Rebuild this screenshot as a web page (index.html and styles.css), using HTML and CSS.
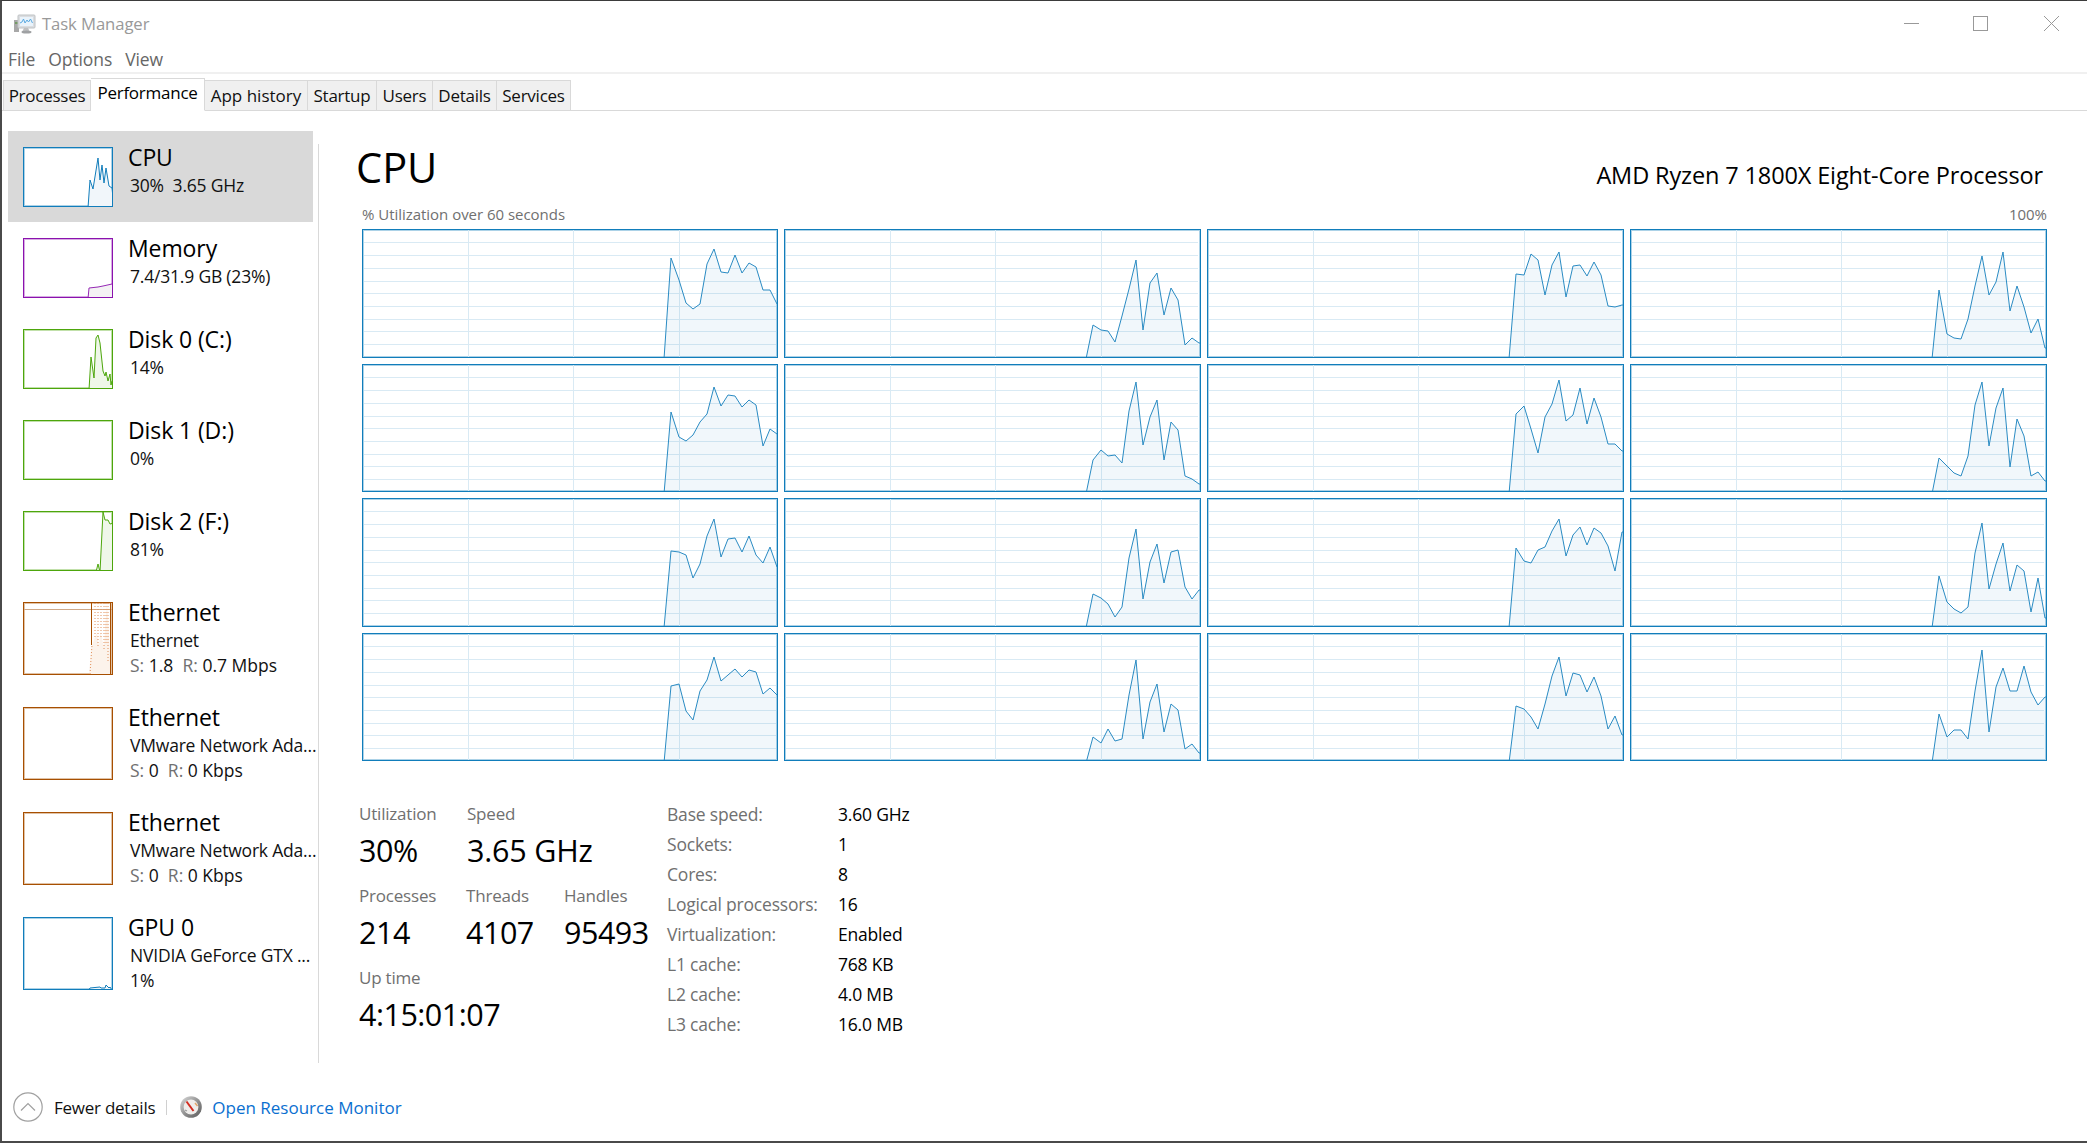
FILE: index.html
```html
<!DOCTYPE html>
<html lang="en">
<head>
<meta charset="utf-8">
<title>Task Manager</title>
<link rel="stylesheet" href="styles.css">
</head>
<body>
<svg class="defs" width="0" height="0" aria-hidden="true">
  <symbol id="grid" viewBox="0 0 419 130" width="419" height="130">
    <path class="grid-line" d="M2 13.5H414M2 26.5H414M2 39.5H414M2 52.5H414M2 64.5H414M2 77.5H414M2 90.5H414M2 102.5H414M2 115.5H414M106.5 0V130M211.5 0V130M317.5 0V130"/>
  </symbol>
</svg>
<div class="window">
  <div class="glow"></div>
  <header class="titlebar">
    <svg class="app-icon" viewBox="0 0 24 20" width="24" height="20">
      <rect x="1" y="6" width="5" height="12" fill="#9a9a9a"/>
      <rect x="2" y="8" width="3" height="2" fill="#5f8a4c"/>
      <rect x="5" y="1" width="17" height="13" rx="1" fill="#d5d8db" stroke="#b5b8bb"/>
      <rect x="7" y="3" width="13" height="9" fill="#e6f2fb"/>
      <path d="M7 9l2-1 1.5-3 1.5 4 2-3 1.5 2 2-3 2 4" fill="none" stroke="#3f9bdc" stroke-width="1"/>
      <path d="M11 14h4l2 4H9z" fill="#b4b6b8"/>
      <ellipse cx="13.5" cy="18" rx="5" ry="1.5" fill="#8f9193"/>
    </svg>
    <span class="app-title">Task Manager</span>
    <div class="controls">
      <svg class="ctl ctl-min" viewBox="0 0 15 15" width="15" height="15"><path d="M0 7.5H15"/></svg>
      <svg class="ctl ctl-max" viewBox="0 0 15 15" width="15" height="15"><rect x=".5" y=".5" width="14" height="14"/></svg>
      <svg class="ctl ctl-close" viewBox="0 0 15 15" width="15" height="15"><path d="M0 0L15 15M15 0L0 15"/></svg>
    </div>
  </header>
  <nav class="menubar"><span>File</span><span>Options</span><span>View</span></nav>
  <div class="tabs">
    <div class="tab t1">Processes</div>
    <div class="tab t2 active">Performance</div>
    <div class="tab t3">App history</div>
    <div class="tab t4">Startup</div>
    <div class="tab t5">Users</div>
    <div class="tab t6">Details</div>
    <div class="tab t7">Services</div>
  </div>
  <div class="content">
    <aside class="sidebar">
      <div class="item selected">
        <div class="thumb blue"><svg viewBox="0 0 88 58"><polygon points="64,60 66,32 69,41 74,10 76,32 78,17 80,35 82,20 85,38 88,40 90,60"/></svg></div>
        <div class="info"><div class="name">CPU</div><div class="sub">30%&nbsp; 3.65 GHz</div></div>
      </div>
      <div class="item">
        <div class="thumb purple"><svg viewBox="0 0 88 58"><polygon points="64,60 65,49 74,48 79,47 88,45 90,45 90,60"/></svg></div>
        <div class="info"><div class="name">Memory</div><div class="sub">7.4/31.9 GB (23%)</div></div>
      </div>
      <div class="item">
        <div class="thumb green"><svg viewBox="0 0 88 58"><polygon points="65,60 67,27 70,48 72,8 74,5 76,13 79,41 81,46 82,42 84,51 86,44 87,55 88,51 90,51 90,60"/></svg></div>
        <div class="info"><div class="name">Disk 0 (C:)</div><div class="sub">14%</div></div>
      </div>
      <div class="item">
        <div class="thumb green"></div>
        <div class="info"><div class="name">Disk 1 (D:)</div><div class="sub">0%</div></div>
      </div>
      <div class="item">
        <div class="thumb green"><svg viewBox="0 0 88 58"><polygon points="72,60 74,52 76,60 79,0 81,8 84,8 86,12 90,11 90,60"/></svg></div>
        <div class="info"><div class="name">Disk 2 (F:)</div><div class="sub">81%</div></div>
      </div>
      <div class="item tall">
        <div class="thumb orange tall"><svg viewBox="0 0 88 71">
          <polygon class="eth-fill" points="65,73 67,45 71,34 73,30 75,44 76,30 78,35 80,45 81,25 83,0 85,30 87,71 88,73"/>
          <path class="eth-guide" d="M0 6.5H88"/>
          <path class="eth-solid" d="M67.5 0V42M86.5 0V71"/>
          <path class="eth-dots" d="M66 71L68 42M71 0V34M74 0V44M77 0V35M80 0V48M82 0V42M84 0V60"/>
        </svg></div>
        <div class="info"><div class="name">Ethernet</div><div class="sub">Ethernet</div><div class="sub"><i>S:</i> 1.8&nbsp; <i>R:</i> 0.7 Mbps</div></div>
      </div>
      <div class="item tall">
        <div class="thumb orange tall"></div>
        <div class="info"><div class="name">Ethernet</div><div class="sub">VMware Network Ada...</div><div class="sub"><i>S:</i> 0&nbsp; <i>R:</i> 0 Kbps</div></div>
      </div>
      <div class="item tall">
        <div class="thumb orange tall"></div>
        <div class="info"><div class="name">Ethernet</div><div class="sub">VMware Network Ada...</div><div class="sub"><i>S:</i> 0&nbsp; <i>R:</i> 0 Kbps</div></div>
      </div>
      <div class="item tall">
        <div class="thumb blue tall"><svg viewBox="0 0 88 71"><polygon points="64,73 66,70 76,69 77,70 81,70 82,67 85,70 86,69 88,72 90,73"/></svg></div>
        <div class="info"><div class="name">GPU 0</div><div class="sub">NVIDIA GeForce GTX ...</div><div class="sub">1%</div></div>
      </div>
    </aside>
    <div class="divider"></div>
    <main class="main">
      <div class="head">
        <h1 class="head-title">CPU</h1>
        <div class="head-model">AMD Ryzen 7 1800X Eight-Core Processor</div>
      </div>
      <div class="caption"><span>% Utilization over 60 seconds</span><span>100%</span></div>
      <div class="graphs">
        <div class="graph"><svg class="plot"><use href="#grid"/><polygon points="302,130 309,29 317,51 324,74 331,80 338,75 345,35 352,20 359,43 366,44 373,26 380,44 387,34 394,38 401,61 408,61 415,75 419,75 419,130"/></svg></div>
        <div class="graph"><svg class="plot"><use href="#grid"/><polygon points="302,130 309,96 317,101 324,102 331,113 338,87 345,60 352,31 359,101 366,54 373,44 380,86 387,59 394,71 401,116 408,109 415,114 419,114 419,130"/></svg></div>
        <div class="graph"><svg class="plot"><use href="#grid"/><polygon points="302,130 309,45 317,46 324,25 331,31 338,66 345,36 352,23 359,68 366,37 373,36 380,47 387,33 394,46 401,77 408,78 415,76 419,76 419,130"/></svg></div>
        <div class="graph"><svg class="plot"><use href="#grid"/><polygon points="302,130 309,61 317,105 324,109 331,110 338,90 345,57 352,27 359,66 366,53 373,23 380,82 387,57 394,78 401,104 408,90 415,119 419,119 419,130"/></svg></div>
        <div class="graph"><svg class="plot"><use href="#grid"/><polygon points="302,130 309,48 317,73 324,77 331,71 338,58 345,50 352,23 359,42 366,31 373,32 380,43 387,36 394,41 401,82 408,65 415,70 419,70 419,130"/></svg></div>
        <div class="graph"><svg class="plot"><use href="#grid"/><polygon points="302,130 309,96 317,86 324,92 331,91 338,99 345,47 352,18 359,81 366,53 373,36 380,96 387,58 394,66 401,112 408,115 415,120 419,120 419,130"/></svg></div>
        <div class="graph"><svg class="plot"><use href="#grid"/><polygon points="302,130 309,50 317,42 324,65 331,89 338,53 345,40 352,16 359,57 366,51 373,24 380,60 387,34 394,53 401,80 408,80 415,87 419,87 419,130"/></svg></div>
        <div class="graph"><svg class="plot"><use href="#grid"/><polygon points="302,130 309,94 317,102 324,109 331,112 338,92 345,41 352,18 359,82 366,44 373,24 380,103 387,55 394,72 401,112 408,108 415,117 419,117 419,130"/></svg></div>
        <div class="graph"><svg class="plot"><use href="#grid"/><polygon points="302,130 309,53 317,54 324,57 331,80 338,66 345,38 352,21 359,59 366,41 373,40 380,54 387,38 394,57 401,65 408,49 415,69 419,69 419,130"/></svg></div>
        <div class="graph"><svg class="plot"><use href="#grid"/><polygon points="302,130 309,96 317,100 324,106 331,119 338,109 345,60 352,31 359,101 366,64 373,46 380,85 387,54 394,52 401,89 408,101 415,92 419,92 419,130"/></svg></div>
        <div class="graph"><svg class="plot"><use href="#grid"/><polygon points="302,130 309,50 317,63 324,65 331,52 338,49 345,33 352,21 359,58 366,37 373,29 380,47 387,30 394,35 401,48 408,73 415,34 419,34 419,130"/></svg></div>
        <div class="graph"><svg class="plot"><use href="#grid"/><polygon points="302,130 309,78 317,104 324,111 331,115 338,109 345,55 352,25 359,91 366,66 373,45 380,93 387,67 394,73 401,114 408,80 415,120 419,120 419,130"/></svg></div>
        <div class="graph"><svg class="plot"><use href="#grid"/><polygon points="302,130 309,53 317,51 324,78 331,87 338,58 345,47 352,24 359,48 366,42 373,36 380,44 387,37 394,39 401,61 408,55 415,62 419,62 419,130"/></svg></div>
        <div class="graph"><svg class="plot"><use href="#grid"/><polygon points="302,130 309,104 317,110 324,96 331,108 338,106 345,62 352,27 359,106 366,69 373,51 380,99 387,71 394,77 401,116 408,111 415,120 419,120 419,130"/></svg></div>
        <div class="graph"><svg class="plot"><use href="#grid"/><polygon points="302,130 309,73 317,76 324,84 331,96 338,71 345,43 352,24 359,63 366,40 373,42 380,59 387,44 394,63 401,96 408,83 415,102 419,102 419,130"/></svg></div>
        <div class="graph"><svg class="plot"><use href="#grid"/><polygon points="302,130 309,81 317,104 324,97 331,97 338,106 345,58 352,17 359,99 366,54 373,35 380,58 387,58 394,33 401,59 408,72 415,64 419,64 419,130"/></svg></div>
      </div>
      <section class="stats">
        <div class="stats-left">
          <div class="stat"><div class="label">Utilization</div><div class="value">30%</div></div>
          <div class="stat span2"><div class="label">Speed</div><div class="value">3.65 GHz</div></div>
          <div class="stat"><div class="label">Processes</div><div class="value">214</div></div>
          <div class="stat"><div class="label">Threads</div><div class="value">4107</div></div>
          <div class="stat"><div class="label">Handles</div><div class="value">95493</div></div>
          <div class="stat span3"><div class="label">Up time</div><div class="value">4:15:01:07</div></div>
        </div>
        <dl class="specs">
          <dt>Base speed:</dt><dd>3.60 GHz</dd>
          <dt>Sockets:</dt><dd>1</dd>
          <dt>Cores:</dt><dd>8</dd>
          <dt>Logical processors:</dt><dd>16</dd>
          <dt>Virtualization:</dt><dd>Enabled</dd>
          <dt>L1 cache:</dt><dd>768 KB</dd>
          <dt>L2 cache:</dt><dd>4.0 MB</dd>
          <dt>L3 cache:</dt><dd>16.0 MB</dd>
        </dl>
      </section>
    </main>
  </div>
  <footer class="footer">
    <svg class="chevron" viewBox="0 0 30 30" width="30" height="30"><circle cx="15" cy="15" r="14.2"/><path d="M8 18.5L15 11.5L22 18.5"/></svg>
    <span class="fewer">Fewer details</span>
    <span class="foot-sep"></span>
    <svg class="monitor" viewBox="0 0 22 22" width="22" height="22">
      <defs><linearGradient id="rim" x1="0" y1="0" x2="1" y2="1"><stop offset="0" stop-color="#dcdcdc"/><stop offset=".55" stop-color="#8c8c8c"/><stop offset="1" stop-color="#5a5a5a"/></linearGradient></defs>
      <circle cx="11" cy="11" r="10.8" fill="url(#rim)"/>
      <circle cx="11" cy="11" r="7.4" fill="#efedeb"/>
      <path d="M6.5 5.5L13.5 15" stroke="#d22b1f" stroke-width="2"/>
      <path d="M15 7l2.5 3" stroke="#e2a56b" stroke-width="1.4"/>
      <path d="M5 14l2 1" stroke="#9a9a9a" stroke-width="1.2"/>
    </svg>
    <span class="link">Open Resource Monitor</span>
  </footer>
</div>
</body>
</html>
```
FILE: styles.css
```css
* { box-sizing: border-box; }
html, body { margin: 0; padding: 0; background: #fff; }
body { font-family: "Open Sans", "Noto Sans", "Liberation Sans", sans-serif; color: #000; }
.defs { position: absolute; }

.window {
  position: relative;
  width: 2087px;
  height: 1143px;
  display: flex;
  flex-direction: column;
  border-top: 1px solid #3b3b3b;
  border-left: 2px solid #4a4a4a;
  border-bottom: 2px solid #4a4a4a;
  overflow: hidden;
}
.glow {
  position: absolute;
  top: -1px;
  left: 1526px;
  width: 150px;
  height: 1px;
  background: linear-gradient(to right, #1d6fa8, #4a3f94, #a8205f);
}

.titlebar { height: 45px; flex: none; display: flex; align-items: center; padding-left: 11px; }
.app-icon { margin-right: 5px; opacity: .85; }
.app-title { font-size: 16.7px; color: #999; letter-spacing: -.1px; }
.controls { margin-left: auto; display: flex; align-items: center; padding-right: 28px; }
.ctl { display: block; fill: none; stroke: #999; stroke-width: 1; }
.ctl-min { margin-right: 54px; }
.ctl-max { margin-right: 56px; }

.menubar { height: 28px; flex: none; display: flex; align-items: center; gap: 13px; padding-left: 6px; border-bottom: 2px solid #f0f0f0; font-size: 17.5px; color: #666; letter-spacing: -.1px; }

.tabs { height: 37px; flex: none; display: flex; align-items: flex-end; padding-left: 1px; border-bottom: 1px solid #d9d9d9; position: relative; }
.tab { height: 31px; margin-bottom: -1px; display: flex; align-items: center; justify-content: center; background: #f0f0f0; border: 1px solid #d9d9d9; border-left: 0; font-size: 17px; color: #111; letter-spacing: -.25px; white-space: nowrap; }
.tab.t1 { width: 88px; border-left: 1px solid #d9d9d9; }
.tab.t2 { width: 114px; height: 33px; background: #fff; border-bottom-color: #fff; align-items: flex-start; padding-top: 2px; color: #000; }
.tab.t3 { width: 103px; letter-spacing: 0; }
.tab.t4 { width: 69px; }
.tab.t5 { width: 56px; }
.tab.t6 { width: 64px; }
.tab.t7 { width: 74px; }

.content { flex: 1; min-height: 0; display: flex; }
.sidebar { width: 316px; flex: none; padding: 20px 0 0 6px; }
.divider { width: 1px; flex: none; margin-top: 33px; background: #d9d9d9; }

.item { height: 91px; width: 305px; display: flex; align-items: flex-start; gap: 15px; padding-left: 15px; }
.item.tall { height: 105px; }
.item.selected { background: #d9d9d9; }
.thumb { width: 90px; height: 60px; margin-top: 16px; flex: none; border: 1px solid; background: #fff; overflow: hidden; }
.thumb.tall { height: 73px; }
.thumb svg { display: block; width: 100%; height: 100%; }
.thumb polygon { stroke-width: 1; }
.blue { border-color: #117dbb; box-shadow: inset 0 0 0 1px rgba(17,125,187,.35); }
.blue polygon { stroke: #117dbb; fill: #f1f6fa; }
.purple { border-color: #8b12ae; box-shadow: inset 0 0 0 1px rgba(139,18,174,.35); }
.purple polygon { stroke: #9528b4; fill: #f4f2f4; }
.green { border-color: #4da60c; box-shadow: inset 0 0 0 1px rgba(77,166,12,.35); }
.green polygon { stroke: #4da60c; fill: #eff7e9; }
.orange { border-color: #a74f01; box-shadow: inset 0 0 0 1px rgba(167,79,1,.35); }
.thumb .eth-fill { stroke: none; fill: #fcf3eb; }
.eth-guide { stroke: #cfa888; stroke-width: 1; }
.eth-solid { stroke: #a74f01; stroke-width: 1; fill: none; }
.eth-dots { stroke: #e0905a; stroke-width: 1; stroke-dasharray: 1 2; fill: none; }
.info { margin-top: 12px; white-space: nowrap; }
.name { font-size: 23px; line-height: 28px; letter-spacing: -.1px; }
.sub { font-size: 17.5px; line-height: 26px; padding-left: 2px; letter-spacing: -.2px; color: #111; }
.name + .sub { margin-top: 1px; }
.sub + .sub { line-height: 25px; letter-spacing: 0; }
.sub i { font-style: normal; color: #707070; }

.main { flex: 1; min-width: 0; padding: 29px 40px 0 43px; }
.head { height: 54px; display: flex; justify-content: space-between; align-items: flex-end; }
.head-title { margin: 0 0 0 -6px; font-size: 41.5px; line-height: 54px; font-weight: 400; }
.head-model { margin-right: 4px; font-size: 23.5px; line-height: 38px; letter-spacing: -.13px; }
.caption { margin-top: 10px; height: 20px; line-height: 20px; display: flex; justify-content: space-between; font-size: 15px; color: #707070; letter-spacing: -.03px; }
.graphs { margin-top: 5px; height: 532px; display: grid; grid-template-columns: 416px 417px 417px 417px; grid-template-rows: repeat(4, 1fr); gap: 6px; }
.graph { position: relative; border: 1px solid #117dbb; box-shadow: inset 0 0 0 1px rgba(17,125,187,.35); overflow: hidden; background: #fff; }
.plot { position: absolute; left: -1px; top: -1px; width: 419px; height: 130px; }
.grid-line { fill: none; stroke: #d9eaf4; stroke-width: 1; shape-rendering: crispEdges; }
.plot polygon { fill: #117dbb; fill-opacity: .06; stroke: #2a8bc3; stroke-width: 1; stroke-opacity: 1; }

.stats { display: flex; padding-top: 38px; }
.stats-left { width: 308px; margin-left: -3px; margin-top: 4px; display: grid; grid-template-columns: 107px 98px auto; grid-auto-rows: 82px; align-content: start; }
.span2 { grid-column: span 2; margin-left: 1px; }
.span2 .value { letter-spacing: -.2px; }
.span3 { grid-column: span 3; }
.label { font-size: 17px; line-height: 22px; color: #707070; letter-spacing: -.2px; }
.value { margin-top: 3px; font-size: 30.5px; line-height: 44px; letter-spacing: -.5px; white-space: nowrap; }
.specs { margin: 0; display: grid; grid-template-columns: 171px auto; grid-auto-rows: 30px; align-items: center; align-content: start; font-size: 17.5px; letter-spacing: -.2px; }
.specs dt { color: #707070; }
.specs dd { margin: 0; }

.footer { height: 78px; flex: none; display: flex; align-items: center; padding: 10px 0 0 11px; font-size: 17px; }
.chevron { fill: none; stroke: #a0a0a0; stroke-width: 1.2; margin-right: 11px; }
.fewer { letter-spacing: -.25px; color: #111; }
.foot-sep { width: 1px; height: 15px; background: #d0d0d0; margin: 0 13px 0 11px; }
.monitor { margin-right: 10px; }
.link { color: #0a6fd0; letter-spacing: 0; }
```
